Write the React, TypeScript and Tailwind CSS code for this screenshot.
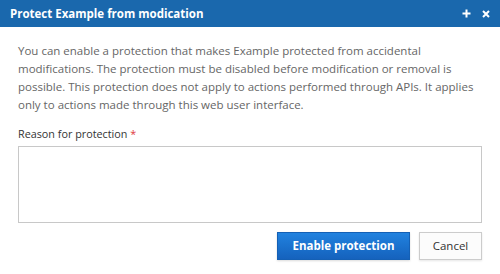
import React from "react"

const App: React.FC = () => {
    return (
        <div className="w-[500px] h-[274px] bg-white font-['Open_Sans',sans-serif] flex flex-col">
            {/* Header */}
            <div className="h-[27px] bg-[#1a68ad] flex items-center justify-between pl-[10px] pr-[10px] shrink-0">
                <h1 className="text-[11.5px] font-bold text-white leading-none">
                    Protect Example from modication
                </h1>
                <div className="flex items-center gap-[11px] text-white">
                    <svg width="9" height="9" viewBox="0 0 9 9">
                        <path d="M4.5 0.5v8M0.5 4.5h8" stroke="currentColor" strokeWidth="2" />
                    </svg>
                    <svg width="8" height="8" viewBox="0 0 8 8">
                        <path d="M1 1l6 6M7 1l-6 6" stroke="currentColor" strokeWidth="2" />
                    </svg>
                </div>
            </div>

            {/* Body */}
            <div className="px-[18px] pt-[15px] flex flex-col">
                <p className="text-[11.5px] leading-[18px] text-[#666]">
                    You can enable a protection that makes Example protected from accidental
                    modifications. The protection must be disabled before modification or removal is
                    possible. This protection does not apply to actions performed through APIs. It applies
                    only to actions made through this web user interface.
                </p>
                <label className="mt-[12px] text-[10.8px] leading-[16px] text-[#333]">
                    Reason for protection <span className="text-[#e0393e]">*</span>
                </label>
                <textarea className="mt-[4px] h-[77px] w-full border border-[#c8c8c8] resize-none outline-none" />
                <div className="mt-[9px] flex justify-end gap-[9px]">
                    <button className="h-[28px] w-[133px] bg-gradient-to-b from-[#2182df] to-[#1562bd] border border-[#1460b5] text-white text-[11.5px] font-bold shadow-[0_1px_2px_rgba(0,0,0,0.15)]">
                        Enable protection
                    </button>
                    <button className="h-[28px] w-[63px] bg-[#fcfcfc] border border-[#ccc] text-[#333] text-[11.5px] shadow-[0_1px_2px_rgba(0,0,0,0.1)]">
                        Cancel
                    </button>
                </div>
            </div>
        </div>
    )
}

export default App
